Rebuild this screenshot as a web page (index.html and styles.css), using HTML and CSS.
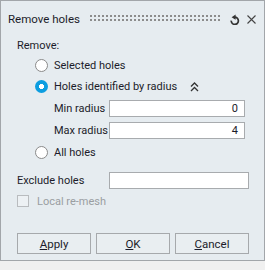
FILE: index.html
```html
<!DOCTYPE html>
<html>
<head>
    <meta name="viewport" content="width=device-width, initial-scale=1.0">
    <link rel="stylesheet" href="styles.css">
</head>
<body>
    <div class="dialog">
        <div class="titlebar">
            <div class="title">Remove holes</div>
            <div class="gripper"></div>
            <svg class="reset-icon" width="10" height="11" viewBox="0 0 10 11">
                <path d="M4.6 3.2 A3.6 3.6 0 1 1 1.2 6.6" fill="none" stroke="#333" stroke-width="1.7"/>
                <polygon points="1.6,3.2 5.6,0.6 5.6,5.8" fill="#333"/>
            </svg>
            <svg class="close-icon" width="9" height="9" viewBox="0 0 9 9">
                <path d="M0.5 0.5 L8.5 8.5 M8.5 0.5 L0.5 8.5" stroke="#444" stroke-width="1.1"/>
            </svg>
        </div>

        <div class="content">
            <div class="section-label">Remove:</div>

            <div class="option-row">
                <span class="radio"></span>
                <span>Selected holes</span>
            </div>
            <div class="option-row short">
                <span class="radio checked"></span>
                <span>Holes identified by radius</span>
                <svg class="collapse-icon" width="9" height="10" viewBox="0 0 9 10">
                    <path d="M1 4.5 L4.5 1 L8 4.5 M1 9 L4.5 5.5 L8 9" fill="none" stroke="#333" stroke-width="1.3"/>
                </svg>
            </div>
            <div class="field-row">
                <span class="field-label">Min radius</span>
                <div class="input num">0</div>
            </div>
            <div class="field-row">
                <span class="field-label">Max radius</span>
                <div class="input num">4</div>
            </div>
            <div class="option-row">
                <span class="radio"></span>
                <span>All holes</span>
            </div>

            <div class="exclude-row">
                <span class="exclude-label">Exclude holes</span>
                <div class="input wide"></div>
            </div>

            <div class="check-row">
                <span class="checkbox"></span>
                <span>Local re-mesh</span>
            </div>

            <div class="buttons">
                <button class="btn"><u>A</u>pply</button>
                <button class="btn"><u>O</u>K</button>
                <button class="btn"><u>C</u>ancel</button>
            </div>
        </div>
    </div>
</body>
</html>
```

FILE: styles.css
```css
body {
    margin: 0;
    background: #f0f0f0;
    font-family: Roboto, "Liberation Sans", sans-serif;
    font-size: 11px;
    color: #1c1c2a;
}
.dialog {
    width: 265px;
    height: 261px;
    box-sizing: border-box;
    border: 1px solid #a2a6aa;
    background: #e6ecf0;
}
.titlebar {
    display: flex;
    align-items: center;
    height: 26px;
    margin-top: 5px;
    padding-left: 7px;
}
.title {
    font-size: 11.5px;
    width: 82px;
}
.gripper {
    width: 130px;
    height: 8px;
    background-image: radial-gradient(circle at 1px 1px, #8c8c8c 0.9px, transparent 1.1px);
    background-size: 4px 4px;
}
.reset-icon {
    margin-left: 10px;
}
.close-icon {
    margin-left: 7px;
}
.content {
    padding-left: 16px;
}
.section-label {
    height: 16px;
    line-height: 16px;
    margin-top: 6px;
}
.option-row {
    display: flex;
    align-items: center;
    height: 22px;
    padding-left: 18px;
}
.option-row.short {
    height: 21px;
}
.radio {
    width: 13px;
    height: 13px;
    box-sizing: border-box;
    border: 1px solid #8a8a8a;
    border-radius: 50%;
    background: #fff;
    margin-right: 6px;
}
.radio.checked {
    border: none;
    background: radial-gradient(circle, #fff 2.3px, #0c9de0 2.8px);
}
.collapse-icon {
    margin-left: 13px;
}
.field-row {
    display: flex;
    align-items: center;
    height: 22px;
    padding-left: 37px;
}
.field-label {
    width: 55px;
}
.input {
    height: 17px;
    box-sizing: border-box;
    border: 1px solid #a8abae;
    background: #fff;
    width: 136px;
    line-height: 15px;
    padding: 0 6px;
}
.input.num {
    text-align: right;
}
.input.wide {
    width: 140px;
}
.exclude-row {
    display: flex;
    align-items: center;
    height: 17px;
    margin-top: 9px;
}
.exclude-label {
    width: 92px;
}
.check-row {
    display: flex;
    align-items: center;
    height: 12px;
    margin-top: 6px;
    color: #9a9ea2;
}
.checkbox {
    width: 12px;
    height: 12px;
    box-sizing: border-box;
    border: 1px solid #b9bcbf;
    background: #edf1f4;
    margin-right: 8px;
}
.buttons {
    display: flex;
    gap: 5px;
    margin-top: 26px;
}
.btn {
    width: 74px;
    height: 21px;
    border: 1px solid #a6a9ac;
    background: #e9eef1;
    font-family: Roboto, "Liberation Sans", sans-serif;
    font-size: 11.5px;
    color: #1c1c2a;
    padding: 0;
}
```
